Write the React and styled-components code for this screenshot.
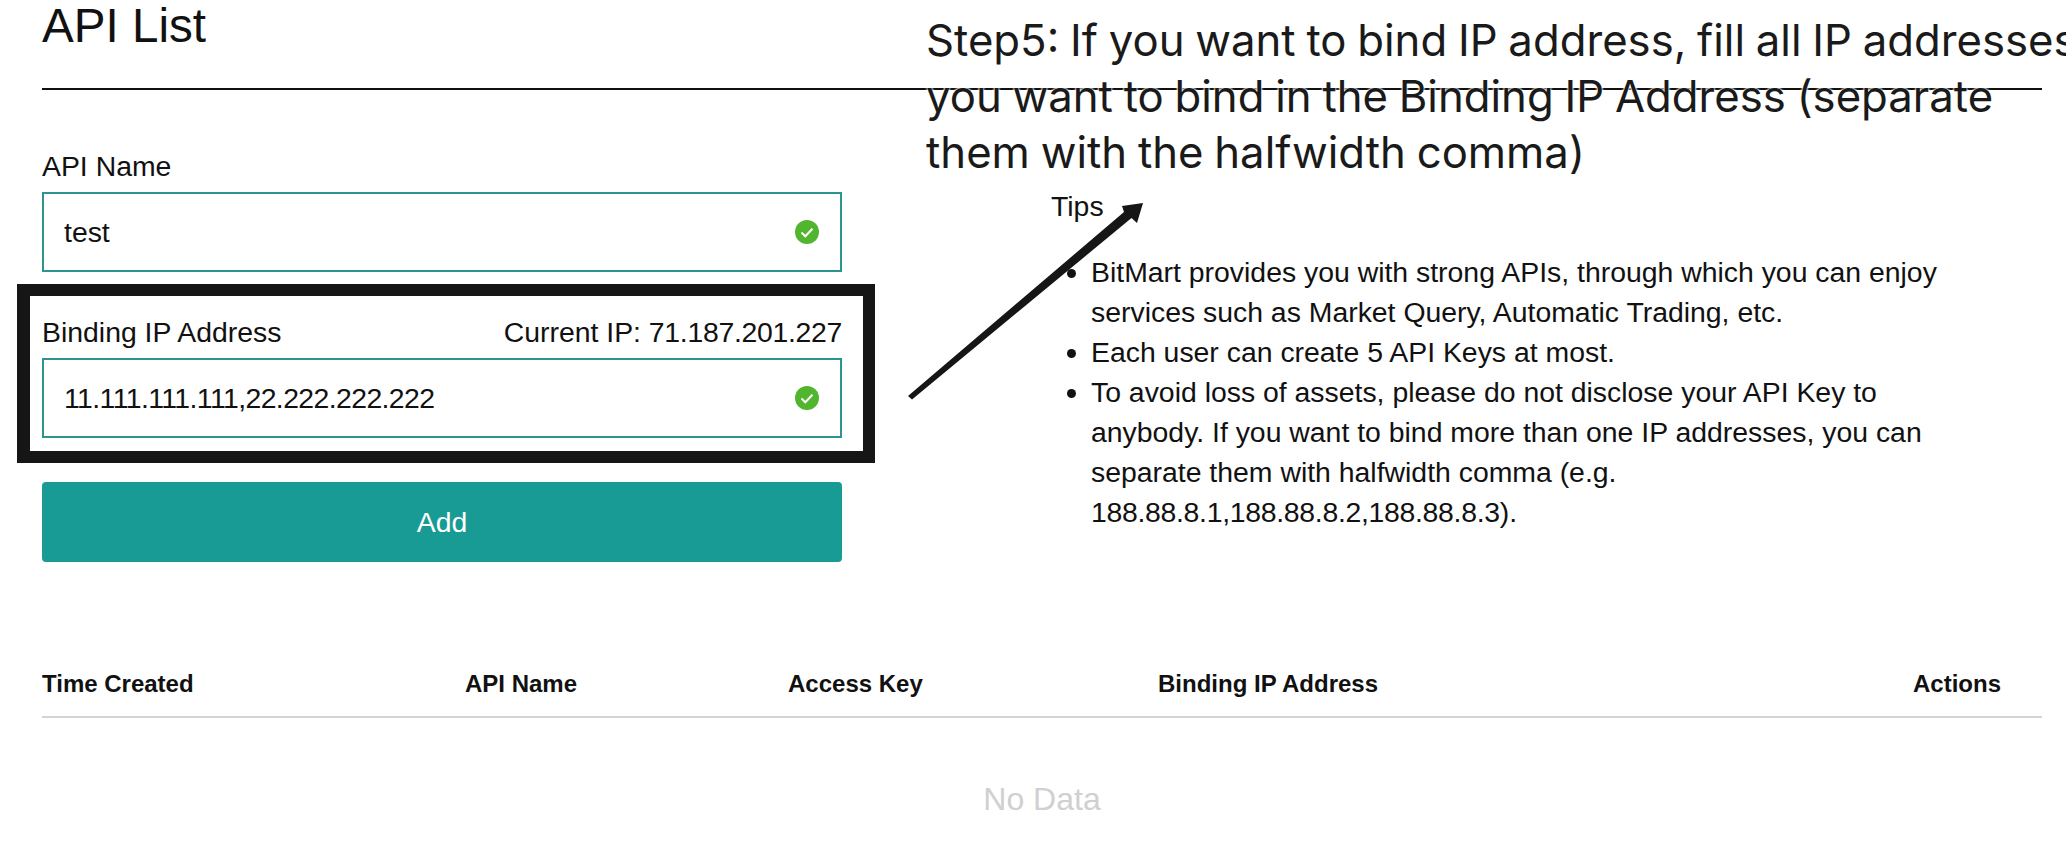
import styled, { createGlobalStyle } from "styled-components";

const GlobalStyle = createGlobalStyle`
  html, body {
    margin: 0;
    padding: 0;
    background: #fff;
    overflow: hidden;
  }
  body {
    font-family: "Liberation Sans", Arial, sans-serif;
    color: #111;
  }
`;

function ValidIcon() {
  return (
    <svg width="24" height="24" viewBox="0 0 24 24">
      <circle cx="12" cy="12" r="12" fill="#52b52f" />
      <path d="M6.5 12.5l3.8 3.8 7.2-7.6" fill="none" stroke="#fff" strokeWidth="2" />
    </svg>
  );
}

function App() {
  return (
    <Page>
      <GlobalStyle />
      <Title>API List</Title>
      <FormRow>
        <Form>
          <Label>API Name</Label>
          <Input>
            test
            <ValidIcon />
          </Input>
          <Highlight>
            <LabelRow>
              <Label>Binding IP Address</Label>
              <Label>
                Current IP: <Digits>71.187.201.227</Digits>
              </Label>
            </LabelRow>
            <Input>
              <IpValue>11.111.111.111,22.222.222.222</IpValue>
              <ValidIcon />
            </Input>
          </Highlight>
          <AddButton>Add</AddButton>
        </Form>
        <Tips>
          <TipsTitle>Tips</TipsTitle>
          <TipsList>
            <li>
              BitMart provides you with strong APIs, through which you can enjoy services such as
              Market Query, Automatic Trading, etc.
            </li>
            <li>Each user can create 5 API Keys at most.</li>
            <li>
              To avoid loss of assets, please do not disclose your API Key to anybody. If you want
              to bind more than one IP addresses, you can separate them with halfwidth comma (e.g.{" "}
              <Digits>188.88.8.1,188.88.8.2,188.88.8.3</Digits>).
            </li>
          </TipsList>
        </Tips>
      </FormRow>
      <TableHead>
        <span>Time Created</span>
        <span>API Name</span>
        <span>Access Key</span>
        <span>Binding IP Address</span>
        <span>Actions</span>
      </TableHead>
      <Empty>No Data</Empty>
      <StepNote>
        Step5: If you want to bind IP address, fill all IP addresses
        <br />
        you want to bind in the Binding IP Address (separate
        <br />
        them with the halfwidth comma)
      </StepNote>
      <Arrow viewBox="0 0 260 220" width="260" height="220">
        <path d="M22 219.5 L18 216 L234 32 L232 26 L253 23 L247 43 L241.5 38 Z" fill="#161616" />
      </Arrow>
    </Page>
  );
}

const Page = styled.div`
  position: relative;
  width: 2066px;
  height: 850px;
  padding: 1px 24px 0 42px;
  box-sizing: border-box;
  overflow: hidden;
`;

const Title = styled.h1`
  margin: 0;
  height: 87px;
  border-bottom: 2px solid #111;
  font-size: 47.6px;
  line-height: 50px;
  font-weight: 400;
`;

const FormRow = styled.div`
  display: flex;
  gap: 209px;
  margin-top: 60px;
`;

const Form = styled.div`
  width: 800px;
  flex: none;
`;

const Label = styled.div`
  font-size: 28.4px;
  line-height: 32px;
  margin-bottom: 10px;
`;

const LabelRow = styled.div`
  display: flex;
  justify-content: space-between;
`;

const Digits = styled.span`
  letter-spacing: -0.3px;
`;

const IpValue = styled.span`
  letter-spacing: -0.6px;
`;

const Input = styled.div`
  display: flex;
  align-items: center;
  justify-content: space-between;
  box-sizing: border-box;
  height: 80px;
  padding: 0 21px 0 20px;
  border: 2px solid #2a9690;
  font-size: 28.4px;
`;

const Highlight = styled.div`
  box-sizing: border-box;
  width: 858px;
  margin: 12px 0 19px -25px;
  padding: 20px 21px 13px 12px;
  border: 12px solid #161616;
  border-left-width: 13px;
`;

const AddButton = styled.button`
  display: block;
  width: 100%;
  height: 80px;
  border: none;
  border-radius: 4px;
  background: #189b95;
  color: #fff;
  font-family: inherit;
  font-size: 28.4px;
`;

const Tips = styled.div`
  width: 900px;
  margin-top: 40px;
`;

const TipsTitle = styled.div`
  font-size: 28.4px;
  line-height: 32px;
`;

const TipsList = styled.ul`
  margin: 30px 0 0;
  padding-left: 40px;
  font-size: 28.4px;
  line-height: 40px;
`;

const TableHead = styled.div`
  display: grid;
  grid-template-columns: 423px 323px 370px 1fr auto;
  margin-top: 106px;
  padding: 0 41px 16px 0;
  border-bottom: 2px solid #d4d4d4;
  font-size: 24px;
  line-height: 32px;
  font-weight: 700;
`;

const Empty = styled.div`
  margin-top: 61px;
  text-align: center;
  font-size: 32px;
  line-height: 40px;
  color: #d0d0d0;
`;

const StepNote = styled.div`
  position: absolute;
  top: 13px;
  left: 926px;
  white-space: nowrap;
  font-family: Inter, sans-serif;
  font-size: 43.7px;
  word-spacing: -1.5px;
  line-height: 56px;
  color: #1a1a1a;
  text-shadow: 0 0 2px #fff, 0 0 2px #fff, 0 0 3px #fff;
`;

const Arrow = styled.svg`
  position: absolute;
  top: 180px;
  left: 890px;
`;

export default App;
